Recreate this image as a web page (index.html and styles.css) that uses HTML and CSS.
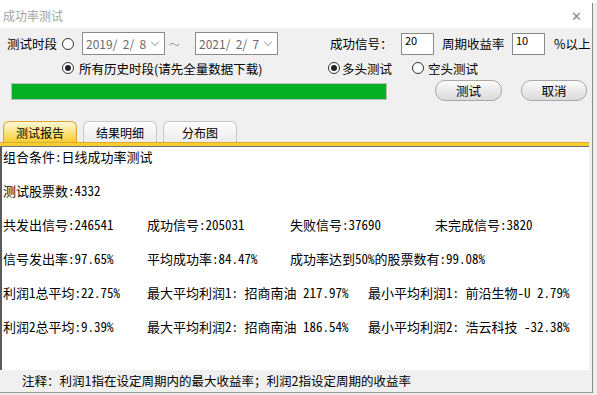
FILE: index.html
```html
<!DOCTYPE html>
<html>
<head>
  <meta charset="utf-8">
  <title>成功率测试</title>
  <link rel="stylesheet" href="styles.css">
</head>
<body>
  <div class="backdrop-top"></div>
  <div class="dialog">
    <div class="titlebar">
      <span class="title">成功率测试</span>
      <span class="close">&#x2715;</span>
    </div>

    <div class="controls">
      <div class="row row-dates">
        <span class="lbl lbl-period">测试时段</span>
        <span class="radio"></span>
        <div class="datebox"><span>2019/&nbsp; 2/&nbsp; 8</span><span class="chev"></span></div>
        <span class="tilde">～</span>
        <div class="datebox"><span>2021/&nbsp; 2/&nbsp; 7</span><span class="chev"></span></div>
        <span class="lbl lbl-signal">成功信号：</span>
        <div class="numbox">20</div>
        <span class="lbl lbl-period-rate">周期收益率</span>
        <div class="numbox">10</div>
        <span class="lbl lbl-pct">%以上</span>
      </div>

      <div class="row row-modes">
        <label class="opt opt-all"><span class="radio checked"></span>所有历史时段(请先全量数据下载)</label>
        <label class="opt opt-long"><span class="radio checked"></span>多头测试</label>
        <label class="opt"><span class="radio"></span>空头测试</label>
      </div>

      <div class="row row-actions">
        <div class="progress"><div class="progress-fill" style="width: 100%"></div></div>
        <button class="btn btn-test">测试</button>
        <button class="btn btn-cancel">取消</button>
      </div>

      <div class="tabs">
        <div class="tab active">测试报告</div>
        <div class="tab">结果明细</div>
        <div class="tab">分布图</div>
      </div>
    </div>
    <div class="tab-band"></div>

    <div class="report">
      <p>组合条件:日线成功率测试</p>
      <p>测试股票数:4332</p>
      <p><span class="c1">共发出信号:246541</span><span class="c2">成功信号:205031</span><span class="c3">失败信号:37690</span><span>未完成信号:3820</span></p>
      <p><span class="c1">信号发出率:97.65%</span><span class="c2">平均成功率:84.47%</span><span>成功率达到50%的股票数有:99.08%</span></p>
      <p><span class="c1">利润1总平均:22.75%</span><span class="c2w">最大平均利润1: 招商南油 217.97%</span><span>最小平均利润1: 前沿生物-U 2.79%</span></p>
      <p><span class="c1">利润2总平均:9.39%</span><span class="c2w">最大平均利润2: 招商南油 186.54%</span><span>最小平均利润2: 浩云科技 -32.38%</span></p>
    </div>

    <div class="footer">注释：利润1指在设定周期内的最大收益率；利润2指设定周期的收益率</div>
  </div>
</body>
</html>
```

FILE: styles.css
```css
body {
  margin: 0;
  background: #ededed;
  font-family: "Noto Sans CJK SC", sans-serif;
  font-size: 12.5px;
  color: #000;
}
.backdrop-top {
  height: 3px;
  background: #fff;
}
.dialog {
  width: 592px;
  height: 389px;
  background: #f0f0f0;
  border-right: 1px solid #8c8c8c;
  border-bottom: 1px solid #9a9a9a;
  display: flex;
  flex-direction: column;
}
.titlebar {
  height: 25px;
  background: #fff;
  display: flex;
  align-items: center;
  justify-content: space-between;
  padding: 0 10px 0 3px;
}
.title {
  color: #a3a3a3;
  font-size: 12px;
}
.close {
  color: #8a8a8a;
  font-size: 13px;
}
.controls {
  padding-top: 4px;
}
.row {
  display: flex;
  align-items: center;
  white-space: nowrap;
}
.row > * {
  flex: none;
}
.row-dates {
  height: 23px;
  padding-left: 7px;
}
.lbl-period {
  width: 55px;
}
.radio {
  width: 10px;
  height: 10px;
  border: 1px solid #333;
  border-radius: 50%;
  background: #fff;
  position: relative;
  flex: none;
}
.radio.checked::after {
  content: "";
  position: absolute;
  left: 2px;
  top: 2px;
  width: 6px;
  height: 6px;
  border-radius: 50%;
  background: #222;
}
.datebox {
  width: 72px;
  height: 21px;
  margin-left: 8px;
  border: 1px solid #8a8a8a;
  background: #fff;
  color: #6a6a6a;
  font-size: 12px;
  display: flex;
  align-items: center;
  justify-content: space-between;
  padding: 0 6px 0 3px;
}
.chev {
  width: 5px;
  height: 5px;
  border-right: 1px solid #b0b0b0;
  border-bottom: 1px solid #b0b0b0;
  transform: rotate(45deg);
  margin-top: -3px;
}
.tilde {
  width: 18px;
  margin-left: 4px;
  color: #9a9a9a;
  font-size: 11px;
}
.lbl-signal {
  margin-left: 52px;
  width: 71px;
}
.numbox {
  width: 28px;
  height: 20px;
  border: 1px solid #8a8a8a;
  background: #fff;
  font-size: 11px;
  line-height: 13px;
  padding-left: 3px;
}
.lbl-period-rate {
  margin-left: 8px;
  width: 70px;
}
.lbl-pct {
  margin-left: 9px;
}
.row-modes {
  height: 20px;
  margin-top: 3px;
  padding-left: 62px;
}
.opt {
  display: flex;
  align-items: center;
  gap: 4px;
}
.opt-all {
  width: 266px;
  gap: 5px;
}
.opt-long {
  width: 84px;
  gap: 2px;
}
.row-actions {
  height: 21px;
  margin-top: 2px;
  padding-left: 11px;
}
.progress {
  width: 374px;
  height: 15px;
  border: 1px solid #bcbcbc;
  background: #e6e6e6;
  margin-top: 2px;
}
.progress-fill {
  height: 100%;
  background: #06b025;
}
.btn {
  height: 21px;
  border: 1px solid #a8a8a8;
  border-radius: 10px;
  background: linear-gradient(#fdfdfd, #e6e6e6 60%, #dcdcdc);
  font-family: inherit;
  font-size: 12.5px;
  padding: 0;
  color: #000;
}
.btn-test {
  width: 67px;
  margin-left: 48px;
}
.btn-cancel {
  width: 66px;
  margin-left: 19px;
}
.tabs {
  display: flex;
  gap: 6px;
  padding-left: 3px;
  margin-top: 20px;
  height: 21px;
}
.tab {
  width: 72px;
  border: 1px solid #c6c6c6;
  border-bottom: none;
  border-radius: 6px 6px 0 0;
  background: linear-gradient(#fdfdfd, #ececec);
  text-align: center;
  line-height: 21px;
  font-size: 12px;
}
.tab.active {
  border-color: #d9a52a;
  background: linear-gradient(#fff8d8, #fbe27a 55%, #f6cd34);
}
.tab-band {
  width: 589px;
  height: 3px;
  background: #f7cf33;
  border-top: 1px solid #e0ab2a;
  border-bottom: 1px solid #6e6e6e;
}
.report {
  width: 586px;
  height: 223px;
  background: #fff;
  border-left: 2px solid #5a5a5a;
  padding-left: 1px;
  font-family: "Noto Sans Mono CJK SC", "Noto Sans CJK SC", monospace;
  font-size: 13px;
}
.report p {
  margin: 0 0 14px;
  line-height: 20px;
  white-space: pre;
  display: flex;
}
.c1 {
  width: 144px;
  flex: none;
}
.c2 {
  width: 143px;
  flex: none;
}
.c3 {
  width: 145px;
  flex: none;
}
.c2w {
  width: 221px;
  flex: none;
}
.footer {
  height: 22px;
  line-height: 22px;
  padding-left: 22px;
  font-size: 12.5px;
}
```
